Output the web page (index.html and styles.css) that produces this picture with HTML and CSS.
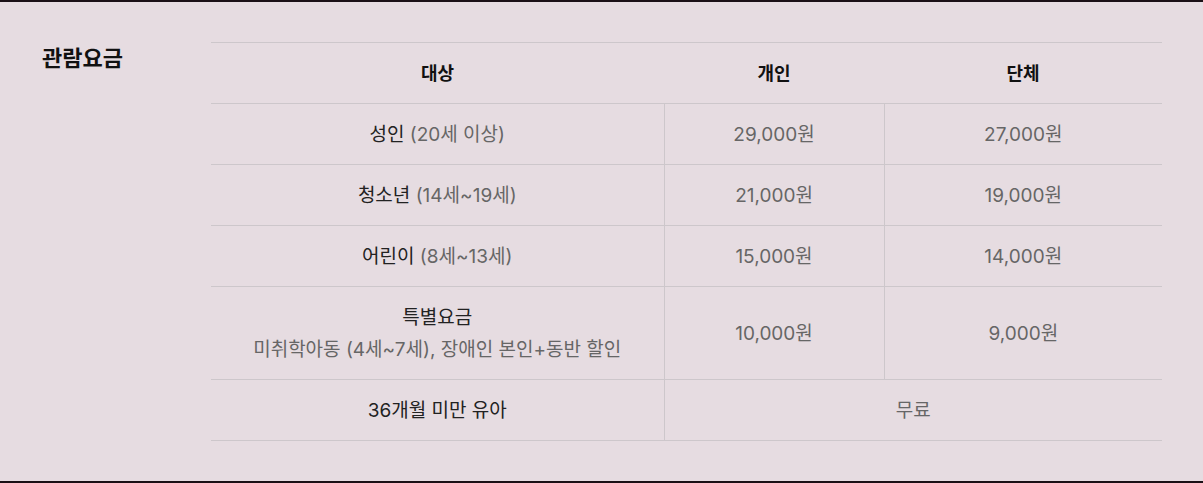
FILE: index.html
```html
<!DOCTYPE html>
<html lang="ko">
<head>
<meta charset="utf-8">
<link rel="stylesheet" href="styles.css">
</head>
<body>
<section class="fee">
  <h2 class="fee-title">관람요금</h2>
  <table class="fee-table">
    <colgroup>
      <col class="c-target">
      <col class="c-single">
      <col class="c-group">
    </colgroup>
    <thead>
      <tr><th>대상</th><th>개인</th><th>단체</th></tr>
    </thead>
    <tbody>
      <tr><td class="label">성인 <span class="sub">(20세 이상)</span></td><td>29,000원</td><td>27,000원</td></tr>
      <tr><td class="label">청소년 <span class="sub">(14세~19세)</span></td><td>21,000원</td><td>19,000원</td></tr>
      <tr><td class="label">어린이 <span class="sub">(8세~13세)</span></td><td>15,000원</td><td>14,000원</td></tr>
      <tr><td class="label">특별요금<br><span class="sub">미취학아동 (4세~7세), 장애인 본인+동반 할인</span></td><td>10,000원</td><td>9,000원</td></tr>
      <tr><td class="label">36개월 미만 유아</td><td colspan="2">무료</td></tr>
    </tbody>
  </table>
</section>
</body>
</html>
```
FILE: styles.css
```css
* { box-sizing: border-box; }
html, body {
  margin: 0;
  padding: 0;
  background: #e6dce1;
}
body {
  font-family: Inter, "Noto Sans CJK KR", "Noto Sans", sans-serif;
  color: #222;
}
.fee {
  height: 483px;
  border-top: 2px solid #1b1016;
  border-bottom: 2px solid #1b1016;
  padding: 40px 41px 40px 42px;
  display: flex;
  align-items: flex-start;
}
.fee-title {
  margin: 0;
  width: 169px;
  flex: none;
  font-size: 22px;
  line-height: 32px;
  font-weight: 700;
  color: #111;
}
.fee-table {
  width: 951px;
  table-layout: fixed;
  border-collapse: collapse;
  border-top: 1px solid #cdc7cb;
  font-size: 18px;
  line-height: 32px;
  text-align: center;
}
.c-target { width: 453px; }
.c-single { width: 220px; }
.c-group { width: 278px; }
.fee-table th {
  font-weight: 700;
  color: #111;
  padding: 15px 0 13px;
  border-bottom: 1px solid #cdc7cb;
}
.fee-table td {
  padding: 15px 0 13px;
  font-size: 19px;
  color: #666;
  border-bottom: 1px solid #cdc7cb;
  border-left: 1px solid #cdc7cb;
}
.fee-table td:first-child { border-left: none; }
.fee-table td.label { color: #222; }
.sub { color: #666; }
```
